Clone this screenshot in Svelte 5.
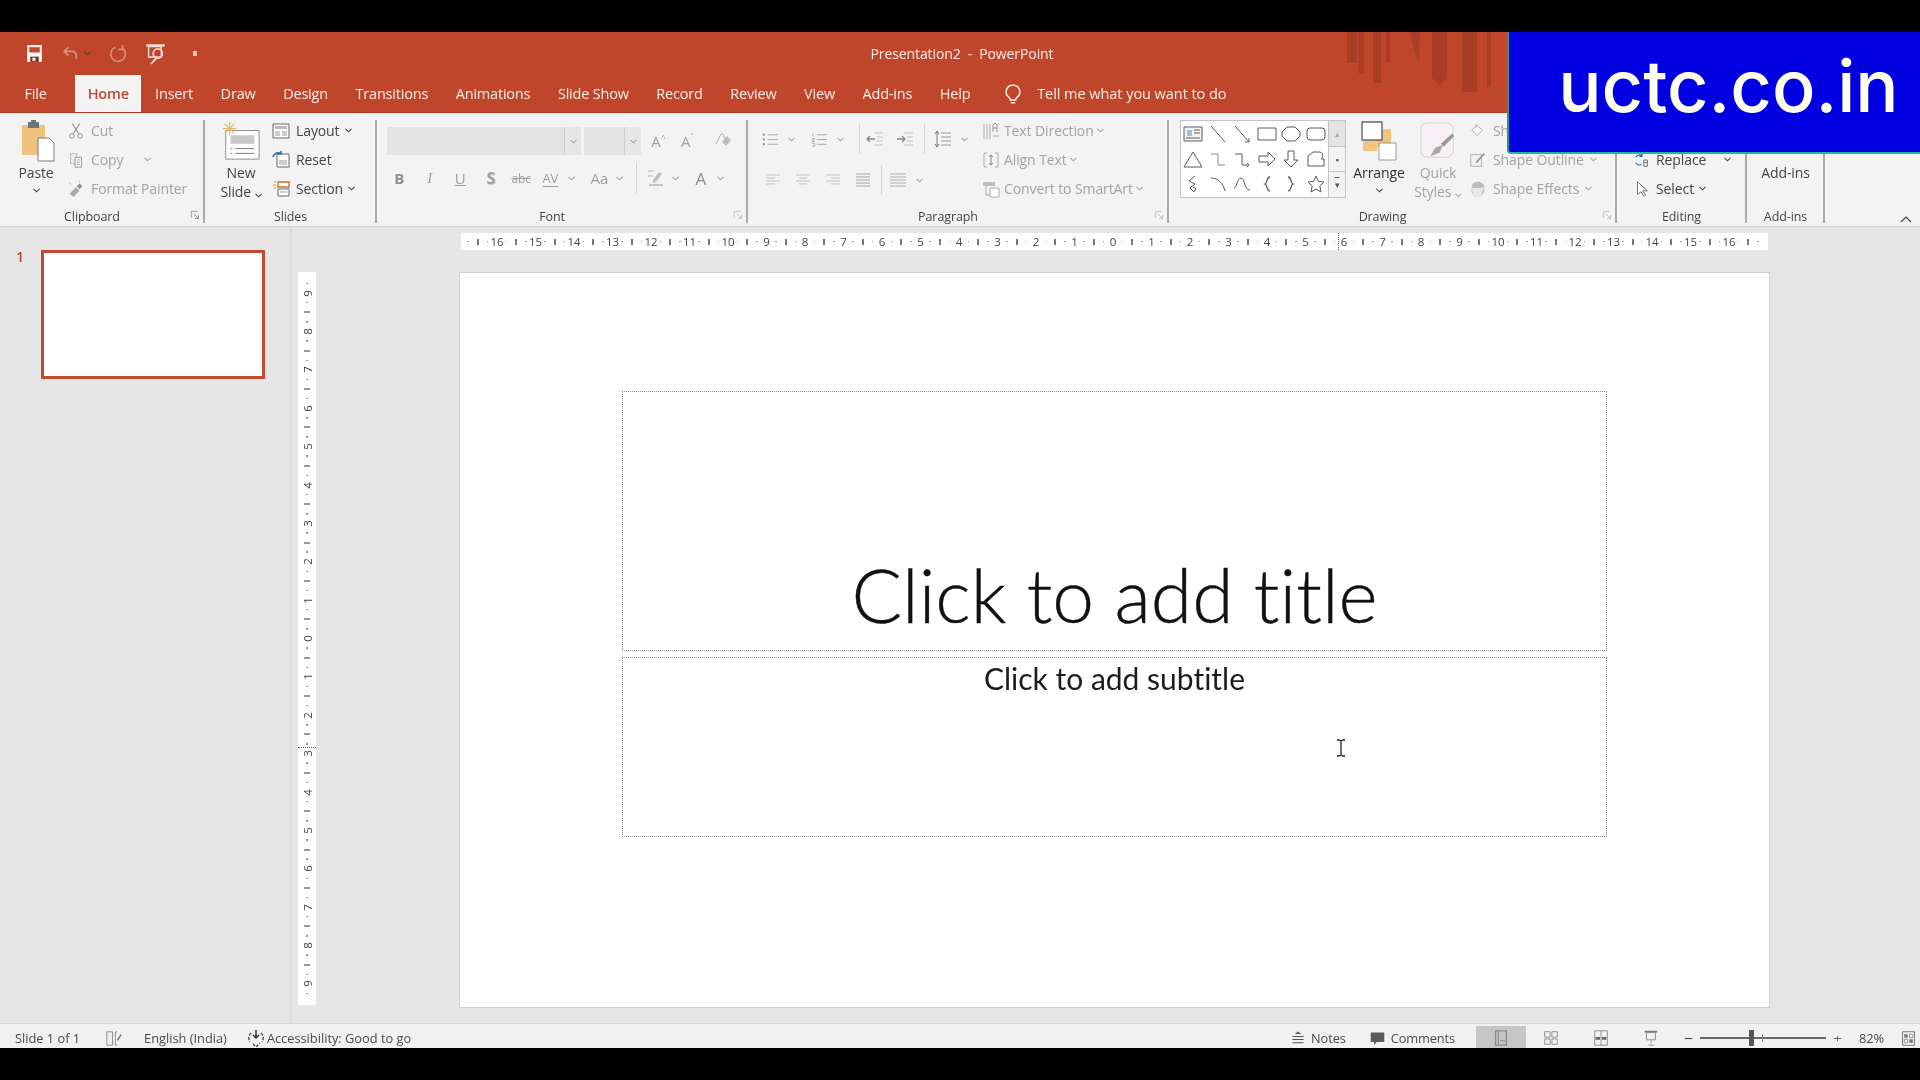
<script>
  const tabs = ['Insert', 'Draw', 'Design', 'Transitions', 'Animations', 'Slide Show', 'Record', 'Review', 'View', 'Add-ins', 'Help'];

  // ruler marks, one slot per quarter of a unit
  function marks(n) {
    const out = [];
    for (let q = -n; q <= n; q++) {
      if (q % 4 === 0) out.push({ kind: 'num', label: Math.abs(q / 4) });
      else if (q % 2 === 0) out.push({ kind: 'tick' });
      else out.push({ kind: 'dot' });
    }
    return out;
  }
  const hMarks = marks(67);
  const vMarks = marks(37);

  const G = '#8d8d8d';
  const icons = {
    save: `<path d="M3 2h14v16H3z" fill="#fbf3f0"/><path d="M5 4h10v5H5z" fill="#c8452a"/><path d="M6 13h8v5H6z" fill="#6b3527"/><path d="M8 14h3v3H8z" fill="#fbf3f0"/>`,
    undo: `<path d="M15 15c2-4-1-8-6-7H4M8 4 4 8l4 4" fill="none" stroke="#d98e7b" stroke-width="1.6"/>`,
    redo: `<path d="M7 4a7 7 0 1 0 7 1M14 2v4h-4" fill="none" stroke="#d98e7b" stroke-width="1.6"/>`,
    present: `<path d="M2 2h16v2H2z" fill="#f4ddd6"/><path d="M4 4h11v9H4z" fill="none" stroke="#f4ddd6" stroke-width="1.200"/><circle cx="12" cy="10" r="4" fill="none" stroke="#f4ddd6" stroke-width="1.500"/><path d="m6 19 5-5" stroke="#f4ddd6" stroke-width="1.500"/>`,
    cut: `<path d="m6 2 7 11M14 2 7 13" stroke="${G}" fill="none" stroke-width="1.2"/><circle cx="5.5" cy="15.5" r="2.5" fill="none" stroke="${G}"/><circle cx="14.5" cy="15.5" r="2.5" fill="none" stroke="${G}"/>`,
    copy: `<path d="M4 3h7v11H4z" fill="#eee" stroke="#b5b5b5"/><path d="M9 7h7v11H9z" fill="#fff" stroke="${G}"/><path d="M11 10h3M11 12.500h3M11 15h3" stroke="${G}"/>`,
    painter: `<path d="m3 15 7-7 4 4-7 7z" fill="#aaa"/><path d="m11 7 3-3 3 3-3 3z" fill="${G}"/><path d="M14 1v2M3 3l1 2" stroke="#d8b77c"/>`,
    layout: `<path d="M2 3h16v14H2z" fill="#fff" stroke="#666"/><path d="M4 5h12v3H4z" fill="#bbb"/><path d="M4 10h5v5H4zM11 10h5v5h-5z" fill="#ccc"/>`,
    reset: `<path d="M6 4h12v13H6z" fill="#fff" stroke="#666"/><path d="M8 10h8v5H8z" fill="#ccc"/><path d="M2 7a5 5 0 0 1 8-3M10 1v3H7" fill="none" stroke="#2c6fb3" stroke-width="1.6"/>`,
    section: `<path d="M7 3h11v5H7z" fill="#fff" stroke="#d0702c" stroke-width="1.4"/><path d="M7 10h11v7H7z" fill="#fff" stroke="#666"/><path d="M3 3h2M2 6h3M3 9h2" stroke="#e6b36c" stroke-width="1.3"/><path d="M9 13h7" stroke="#999"/>`,
    launcher: `<path d="M2 2h10M2 2v10" stroke="#777"/><path d="m6 6 7 7M13 8v5H8" fill="none" stroke="#555"/>`,
    launcherOff: `<path d="M2 2h10M2 2v10" stroke="#b0b0b0"/><path d="m6 6 7 7M13 8v5H8" fill="none" stroke="#aaa"/>`,
    clear: `<path d="m9 11 5-6 4 4-5 6z" fill="#bdbdbd"/><path d="M3 13 8 3h2l4 9" fill="none" stroke="#b4b4b4"/>`,
    hilite: `<path d="M2 8h5M2 3h6" stroke="#b8b8b8" stroke-width="1.200"/><path d="m7 12 6-8 3 2-6 8-3 1z" fill="#bfbfbf"/><path d="M3 17h14" stroke="#c4c4c4" stroke-width="2"/>`,
    bullets: `<path d="M7 5h11M7 10h11M7 15h11" stroke="#a8a8a8"/><circle cx="3" cy="5" r="1.200" fill="#999"/><circle cx="3" cy="10" r="1.200" fill="#999"/><circle cx="3" cy="15" r="1.200" fill="#999"/>`,
    numbers: `<path d="M7 5h11M7 10h11M7 15h11" stroke="#a8a8a8"/><path d="M3 3v4M2 9h3l-3 3h3M2 14h3v3H2" stroke="#999" fill="none" stroke-width=".8"/>`,
    indentL: `<path d="M9 4h9M12 8h6M12 12h6M9 16h9" stroke="#c4c4c4"/><path d="M10 10H2m3-3-3 3 3 3" stroke="#888" fill="none" stroke-width="1.300"/>`,
    indentR: `<path d="M9 4h9M12 8h6M12 12h6M9 16h9" stroke="#c4c4c4"/><path d="M2 10h8M7 7l3 3-3 3" stroke="#888" fill="none" stroke-width="1.300"/>`,
    spacing: `<path d="M8 4h10M8 8h10M8 12h10M8 16h10" stroke="#999"/><path d="M4 2v16M2 5l2-3 2 3M2 15l2 3 2-3" fill="none" stroke="#777"/>`,
    alignL: `<path d="M3 5h14M3 8h9M3 11h14M3 14h9" stroke="#c4c4c4" stroke-width="1.200"/>`,
    alignC: `<path d="M3 5h14M6 8h8M3 11h14M6 14h8" stroke="#c4c4c4" stroke-width="1.200"/>`,
    alignR: `<path d="M3 5h14M8 8h9M3 11h14M8 14h9" stroke="#c4c4c4" stroke-width="1.200"/>`,
    justify: `<path d="M3 4h14M3 7h14M3 10h14M3 13h14M3 16h14" stroke="#a5a5a5" stroke-width="1.200"/>`,
    cols: `<path d="M2 4h16M2 7h16M2 10h16M2 13h16M2 16h16" stroke="#b0b0b0"/>`,
    textDir: `<path d="M3 3v15M6 3v15M9 3v15" stroke="#aaa"/><path d="M12 11V4l2-2 2 2v7M12 7h4" fill="none" stroke="#999"/><path d="M12 15h6" stroke="#aaa"/>`,
    alignText: `<path d="M6 3H3v14h3M14 3h3v14h-3" fill="none" stroke="#aaa"/><path d="M10 5v10M8 7l2-2 2 2M8 13l2 2 2-2" fill="none" stroke="#888"/>`,
    smartArt: `<path d="M2 3h12v4H2z" fill="#bbb"/><path d="M9 9h9v9H9z" fill="#fff" stroke="#aaa"/><path d="M5 7v9h4" fill="none" stroke="#aaa"/>`,
    fill: `<path d="m9 4 6 5-6 6-6-6z" fill="#f8f8f8" stroke="#aaa"/><path d="M8 2v4" stroke="#aaa"/>`,
    outline: `<path d="M2 4h12v13H2z" fill="none" stroke="#aaa"/><path d="m8 13 9-10" stroke="#999" stroke-width="2"/>`,
    effects: `<path d="M3 8c0-4 3-6 7-6s7 3 7 6v5l-4 5H6l-3-4z" fill="#bdbdbd"/><path d="M3 9h10l4-1-4 10H5z" fill="#e8e8e8"/>`,
    replace: `<path d="M3 7c2-3 5-3 7-2M10 3v3H7" stroke="#2c6fb3" fill="none" stroke-width="1.300"/><path d="M3 13c2 3 4 3 6 2" stroke="#2c6fb3" fill="none" stroke-width="1.300"/><path d="M12 10h4v7h-4zM12 13h4" stroke="#666" fill="none"/>`,
    select: `<path d="M5 2v14l4-3 3 5 2-1-3-5h5z" fill="#fff" stroke="#666"/>`,
    bulb: `<path d="M10 2a6 6 0 0 0-3.500 11c.8.7 1 1.500 1 2.500h5c0-1 .2-1.800 1-2.500A6 6 0 0 0 10 2zM8 18h4" fill="none" stroke="#fbeee9" stroke-width="1.300"/>`,
    notesPage: `<path d="M3 3h6v14H3zM12 3h2M12 17h2M12 3v14" fill="none" stroke="#8a8a8a"/><path d="m14 12 4-6" stroke="#666" stroke-width="1.300"/>`,
    access: `<path d="M10 2v8M7 7l3 3 3-3" fill="none" stroke="#333" stroke-width="1.500"/><path d="M5 5a7 7 0 0 0-1 9M15 5a7 7 0 0 1 1 9M7 16l3 3 4-4" fill="none" stroke="#444" stroke-width="1.300" stroke-dasharray="3 1.500"/>`,
    notes: `<path d="M3 8h14M3 12h14M3 16h14" stroke="#555" stroke-width="1.300"/><path d="m6 5 4-3 4 3z" fill="#555"/>`,
    comments: `<path d="M2 3h16v11H9l-3 4v-4H2z" fill="#5a5a5a"/>`,
    normal: `<path d="M4 2h12v16H4z" fill="none" stroke="#8a8a8a" stroke-width="1.400"/><path d="M7 2v16M9 13h6" stroke="#8a8a8a" stroke-width="1.200"/>`,
    sorter: `<path d="M3 3h6v6H3zM11 3h6v6h-6zM3 11h6v6H3zM11 11h6v6h-6z" fill="none" stroke="#8a8a8a"/>`,
    reading: `<path d="M3 2h14v16H3zM10 2v16" fill="none" stroke="#8a8a8a"/><path d="M4 9h5v3H4zM11 9h5v3h-5z" fill="#666"/>`,
    show: `<path d="M3 3h14" stroke="#777" stroke-width="2"/><path d="M5 4h10v8H5zM10 12v4M7 18h6" fill="none" stroke="#8a8a8a"/>`,
    fit: `<path d="M3 2h14v16H3z" fill="none" stroke="#666"/><path d="M5 5h4v4H5zM11 11h4v4h-4z" fill="#777"/><path d="M11 5h4v4h-4zM5 11h4v4H5z" fill="none" stroke="#888"/>`,
    minus: `<path d="M3 10h14" stroke="#444" stroke-width="2"/>`,
    plus: `<path d="M3 10h14M10 5v10" stroke="#444" stroke-width="1.400"/>`,
    ibeam: `<path d="M6 2h2l2 1 2-1h2M10 3v14M6 18h2l2-1 2 1h2" fill="none" stroke="#222" stroke-width="1.300"/>`
  };

  const S = '#5a5a5a';
  const shapes = [
    `<path d="M1 3h18v14H1z" fill="#f4f4f4" stroke="${S}"/><path d="M4 6h5v6H4z" fill="#9dbfe6"/><path d="M11 6h6M11 9h6M3 14h14" stroke="${S}"/>`,
    `<path d="m3 2 14 16" stroke="${S}"/>`,
    `<path d="m3 2 14 16M17 14v4h-4" stroke="${S}" fill="none"/>`,
    `<path d="M1 4h18v12H1z" fill="none" stroke="${S}"/>`,
    `<path d="M6 3h8l5 5v4l-5 5H6l-5-5V8z" fill="none" stroke="${S}"/>`,
    `<rect x="1" y="4" width="18" height="12" rx="3" fill="none" stroke="${S}"/>`,
    `<path d="M10 3 1 18h18z" fill="none" stroke="${S}"/>`,
    `<path d="M3 5h7v11h7" fill="none" stroke="#8b8b8b"/>`,
    `<path d="M3 5h7v11h7m-2-2 2 2-2 2" fill="none" stroke="${S}"/>`,
    `<path d="M2 7h9V3l7 7-7 7v-4H2z" fill="none" stroke="${S}"/>`,
    `<path d="M7 2h6v9h4l-7 7-7-7h4z" fill="none" stroke="${S}"/>`,
    `<path d="M2 17V7l5-4h6c3 0 5 3 3 6l-1 1h3v7z" fill="none" stroke="${S}"/>`,
    `<path d="m12 2-6 5 6 3-5 4 4 4 2-3-3-2" fill="none" stroke="${S}"/>`,
    `<path d="M3 4c7 0 12 5 14 13" fill="none" stroke="${S}"/>`,
    `<path d="M2 14c3 0 3-10 7-10s3 12 9 12" fill="none" stroke="${S}"/>`,
    `<path d="M13 3c-4 0-2 6-5 7 3 1 1 7 5 7" fill="none" stroke="${S}" stroke-width="1.300"/>`,
    `<path d="M7 3c4 0 2 6 5 7-3 1-1 7-5 7" fill="none" stroke="${S}" stroke-width="1.300"/>`,
    `<path d="m10 2 2.500 5.500 5.500.5-4.200 4 1.200 6-5-3-5 3 1.200-6L2 8l5.500-.5z" fill="none" stroke="${S}"/>`
  ];
</script>

{#snippet ico(name, size = 18)}
  <svg class="ico" width={size} height={size} viewBox="0 0 20 20">{@html icons[name]}</svg>
{/snippet}

{#snippet caret(off = false)}
  <svg class="caret" class:off width="7" height="5" viewBox="0 0 7 5"><path d="m.5.8 3 3 3-3" fill="none" stroke="currentColor" stroke-width="1.100"/></svg>
{/snippet}

<div class="page">
  <div class="blackbar top"></div>

  <header class="chrome">
    <svg class="art" width="160" height="62" viewBox="0 0 160 62">
      <path d="M7 0h10v31H7zM18 0h6v41h-6zM33 0h8v51h-8zM46 0h4v31h-4zM70 0h10l-1 28-4-6zM92 0h15v46l-8 7-7-7zM122 0h15v60h-15zM147 0h4v55h-4z" fill="#a83e25"/>
    </svg>
    <div class="titlerow">
      <div class="qat">
        {@render ico('save', 21)}
        {@render ico('undo', 21)}
        <span class="qcaret">{@render caret()}</span>
        <span class="redo">{@render ico('redo', 21)}</span>
        {@render ico('present', 23)}
        <span class="qdot"></span>
      </div>
      <div class="doctitle">Presentation2&nbsp; -&nbsp; PowerPoint</div>
      <div></div>
    </div>
    <nav class="tabs">
      <div class="tab file">File</div>
      <div class="tab active">Home</div>
      {#each tabs as t}
        <div class="tab">{t}</div>
      {/each}
      <div class="tell">{@render ico('bulb', 22)}<span>Tell me what you want to do</span></div>
    </nav>
  </header>

  <section class="ribbon">
    <div class="group g-clip">
      <div class="body">
        <div class="big paste">
          <svg width="36" height="44" viewBox="0 0 36 44">
            <path d="M2 6h23v30H2z" fill="#efc27e"/><path d="M8 3h11v6H8z" fill="#6d7377"/><path d="M11 1h5v3h-5z" fill="#6d7377"/>
            <path d="M18 19h11l5 5v18H18z" fill="#fff" stroke="#7a7a7a"/>
          </svg>
          <span>Paste</span>
          {@render caret()}
        </div>
        <div class="rows">
          <div class="row off">{@render ico('cut')}<span>Cut</span></div>
          <div class="row off">{@render ico('copy')}<span>Copy</span><i class="gap"></i>{@render caret(true)}</div>
          <div class="row off">{@render ico('painter')}<span>Format Painter</span></div>
        </div>
      </div>
      <div class="label">Clipboard<span class="launch">{@render ico('launcher', 13)}</span></div>
    </div>
    <div class="sep"></div>

    <div class="group g-slides">
      <div class="body">
        <div class="big newslide">
          <svg width="40" height="40" viewBox="0 0 40 42">
            <path d="M4 10h35v30H4z" fill="#fff" stroke="#8a8a8a"/><path d="M9 15h25v9H9z" fill="#c8c8c8"/><path d="M14 29h20M14 34h20M9 29h2M9 34h2" stroke="#777"/>
            <path d="M8 1v14M1 8h14M3 3l10 10M13 3 3 13" stroke="#eab96b" stroke-width="1.400"/>
          </svg>
          <span>New</span>
          <span>Slide {@render caret()}</span>
        </div>
        <div class="rows">
          <div class="row">{@render ico('layout', 20)}<span>Layout</span>{@render caret()}</div>
          <div class="row">{@render ico('reset', 20)}<span>Reset</span></div>
          <div class="row">{@render ico('section', 20)}<span>Section</span>{@render caret()}</div>
        </div>
      </div>
      <div class="label">Slides</div>
    </div>
    <div class="sep"></div>

    <div class="group g-font">
      <div class="body col">
        <div class="fontrow one">
          <div class="combo name"><i></i><b>{@render caret(true)}</b></div>
          <div class="combo size"><i></i><b>{@render caret(true)}</b></div>
          <span class="grow">A<sup>^</sup></span>
          <span class="grow">A<sup>ˇ</sup></span>
          <span class="clear">{@render ico('clear', 20)}</span>
        </div>
        <div class="fontrow two">
          <span class="fb bold">B</span>
          <span class="fb ital">I</span>
          <span class="fb und">U</span>
          <span class="fb shad">S</span>
          <span class="fb strike">abc</span>
          <span class="fb wide w-av"><em class="av">AV</em>{@render caret(true)}</span>
          <span class="fb wide w-aa"><em>Aa</em>{@render caret(true)}</span>
          <span class="vsep"></span>
          <span class="fb wide w-hl">{@render ico('hilite', 20)}{@render caret(true)}</span>
          <span class="fb wide w-a"><em>A</em>{@render caret(true)}</span>
        </div>
      </div>
      <div class="label launchable">Font<span class="launch">{@render ico('launcherOff', 13)}</span></div>
    </div>
    <div class="sep"></div>

    <div class="group g-para">
      <div class="body">
        <div class="paraleft">
          <div class="pararow">
            <span class="pb">{@render ico('bullets', 19)}{@render caret(true)}</span>
            <span class="pb">{@render ico('numbers', 19)}{@render caret(true)}</span>
            <span class="vsep"></span>
            <span class="pi">{@render ico('indentL', 20)}</span>
            <span class="pi">{@render ico('indentR', 20)}</span>
            <span class="vsep v2"></span>
            <span class="pb last">{@render ico('spacing', 20)}{@render caret(true)}</span>
          </div>
          <div class="pararow two">
            <span class="pa">{@render ico('alignL', 20)}</span>
            <span class="pa">{@render ico('alignC', 20)}</span>
            <span class="pa">{@render ico('alignR', 20)}</span>
            <span class="pa">{@render ico('justify', 20)}</span>
            <span class="vsep"></span>
            <span class="pb">{@render ico('cols', 20)}{@render caret(true)}</span>
          </div>
        </div>
        <div class="rows">
          <div class="row off">{@render ico('textDir', 20)}<span>Text Direction</span>{@render caret(true)}</div>
          <div class="row off">{@render ico('alignText', 20)}<span>Align Text</span>{@render caret(true)}</div>
          <div class="row off">{@render ico('smartArt', 20)}<span>Convert to SmartArt</span>{@render caret(true)}</div>
        </div>
      </div>
      <div class="label launchable">Paragraph<span class="launch">{@render ico('launcherOff', 13)}</span></div>
    </div>
    <div class="sep"></div>

    <div class="group g-draw">
      <div class="body">
        <div class="gallery">
          <div class="shapes">
            {#each shapes as s}
              <svg width="20" height="20" viewBox="0 0 20 20">{@html s}</svg>
            {/each}
          </div>
          <div class="scroller">
            <span class="sup">▴</span>
            <span>▪</span>
            <span class="more">▾</span>
          </div>
        </div>
        <div class="big arrange">
          <svg width="40" height="40" viewBox="0 0 40 40">
            <path d="M14 8h18v18H14zM4 20h14v10H4z" fill="#f2c57f"/>
            <path d="M3 1h20v18H3z" fill="#fff" stroke="#666" stroke-width="1.400"/>
            <path d="M20 22h17v17H20z" fill="#fff" stroke="#9a9a9a"/>
          </svg>
          <span>Arrange</span>
          {@render caret()}
        </div>
        <div class="big quick off">
          <svg width="40" height="40" viewBox="0 0 40 42">
            <rect x="2" y="2" width="34" height="36" rx="7" fill="#f8f0f5" stroke="#d4d0d2"/>
            <path d="m12 37 5-9 8-3-3 8z" fill="#aaa"/><path d="m23 24 12-11 2 3-11 11z" fill="#999"/>
          </svg>
          <span>Quick</span>
          <span>Styles {@render caret(true)}</span>
        </div>
        <div class="rows shapefmt">
          <div class="row off">{@render ico('fill', 18)}<span>Shape Fill</span></div>
          <div class="row off">{@render ico('outline', 18)}<span>Shape Outline</span>{@render caret(true)}</div>
          <div class="row off">{@render ico('effects', 18)}<span>Shape Effects</span>{@render caret(true)}</div>
        </div>
      </div>
      <div class="label launchable">Drawing<span class="launch">{@render ico('launcherOff', 13)}</span></div>
    </div>
    <div class="sep"></div>

    <div class="group g-edit">
      <div class="body">
        <div class="rows">
          <div class="row">{@render ico('replace', 18)}<span>Find</span></div>
          <div class="row">{@render ico('replace', 18)}<span>Replace</span><i class="gap"></i>{@render caret()}</div>
          <div class="row">{@render ico('select', 18)}<span>Select</span>{@render caret()}</div>
        </div>
      </div>
      <div class="label">Editing</div>
    </div>
    <div class="sep"></div>

    <div class="group g-addins">
      <div class="body center"><span>Add-ins</span></div>
      <div class="label">Add-ins</div>
    </div>
    <div class="sep"></div>

    <div class="collapse">
      <svg width="12" height="8" viewBox="0 0 12 8"><path d="m1 7 5-5 5 5" fill="none" stroke="#444" stroke-width="1.200"/></svg>
    </div>
  </section>

  <main class="work">
    <aside class="pane">
      <span class="num">1</span>
      <div class="thumb"></div>
    </aside>
    <div class="stage">
      <div class="hruler">
        {#each hMarks as m}
          <span class="hslot">
            {#if m.kind === 'num'}{m.label}{:else if m.kind === 'tick'}<i class="t"></i>{:else}<i class="d"></i>{/if}
          </span>
        {/each}
        <i class="hcursor"></i>
      </div>
      <div class="vruler">
        {#each vMarks as m}
          <span class="vslot">
            {#if m.kind === 'num'}<em>{m.label}</em>{:else if m.kind === 'tick'}<i class="t"></i>{:else}<i class="d"></i>{/if}
          </span>
        {/each}
        <i class="vcursor"></i>
      </div>
      <div class="slide">
        <div class="ph title"><span>Click to add title</span></div>
        <div class="ph subtitle"><span>Click to add subtitle</span></div>
        <span class="beam">{@render ico('ibeam', 20)}</span>
      </div>
    </div>
  </main>

  <footer class="status">
    <div class="sleft">
      <span class="s1">Slide 1 of 1</span>
      <span class="s2">{@render ico('notesPage', 19)}</span>
      <span class="s3">English (India)</span>
      <span class="s4">{@render ico('access', 20)}<span>Accessibility: Good to go</span></span>
    </div>
    <div class="sright">
      <span class="sbtn notes">{@render ico('notes', 16)}Notes</span>
      <span class="sbtn comm">{@render ico('comments', 17)}Comments</span>
      <span class="view on">{@render ico('normal', 18)}</span>
      <span class="view">{@render ico('sorter', 18)}</span>
      <span class="view">{@render ico('reading', 18)}</span>
      <span class="view">{@render ico('show', 18)}</span>
      <span class="zoomctl">
        {@render ico('minus', 11)}
        <span class="slider"><i class="mid"></i><i class="thumbz"></i></span>
        {@render ico('plus', 11)}
      </span>
      <span class="pct">82%</span>
      <span class="fit">{@render ico('fit', 17)}</span>
    </div>
  </footer>

  <div class="blackbar bottom"></div>

  <div class="badge">uctc.co.in</div>
</div>

<style>
  :global(body) {
    margin: 0;
    background: #000;
  }

  .page {
    position: relative;
    width: 1920px;
    height: 1080px;
    overflow: hidden;
    display: flex;
    flex-direction: column;
    font-family: "Open Sans", "Liberation Sans", sans-serif;
    font-size: 13px;
    color: #444;
    background: #000;
    filter: blur(0.35px);
  }

  .blackbar { background: #000; flex: none; }
  .blackbar.top { height: 32px; }
  .blackbar.bottom { height: 32px; }

  /* title bar + tabs */
  .chrome {
    position: relative;
    height: 81px;
    flex: none;
    background: #bf462a;
    border-bottom: 1px solid #a93c22;
    box-sizing: border-box;
    color: #fbeee9;
  }

  .art {
    position: absolute;
    left: 1340px;
    top: 0;
  }

  .titlerow {
    height: 43px;
    display: grid;
    grid-template-columns: 1fr auto 1fr;
    align-items: center;
  }

  .qat {
    display: flex;
    align-items: center;
    padding-left: 24px;
    gap: 15px;
  }

  .qcaret {
    margin-left: -12px;
    color: #d98e7b;
    display: flex;
  }

  .redo { display: flex; margin-left: 2px; }

  .qdot {
    width: 4px;
    height: 5px;
    background: #f0c9bd;
    margin-left: 11px;
  }

  .doctitle {
    font-size: 14px;
    margin-left: 4px;
    letter-spacing: -0.1px;
  }

  .tabs {
    height: 37px;
    display: flex;
    align-items: stretch;
    font-size: 14.500px;
    letter-spacing: -0.2px;
  }

  .tab {
    padding: 0 13.800px;
    display: flex;
    align-items: center;
  }

  .tab.file {
    margin-left: 11px;
    margin-right: 15px;
    padding: 0 13.500px;
  }

  .tab.active {
    background: #f3f3f3;
    color: #bd4a30;
    font-weight: 600;
    padding: 0 12.5px;
  }

  .tell {
    display: flex;
    align-items: center;
    gap: 13px;
    margin-left: 18px;
    letter-spacing: -0.05px;
  }

  /* ribbon */
  .ribbon {
    height: 114px;
    flex: none;
    display: flex;
    background: #f3f3f3;
    border-top: 1px solid #e2eef4;
    border-bottom: 1px solid #d4d4d4;
    box-sizing: border-box;
    font-size: 14px;
    letter-spacing: -0.1px;
    color: #444;
  }

  .group {
    display: flex;
    flex-direction: column;
    flex: none;
    padding-top: 2px;
    box-sizing: border-box;
  }

  .g-clip { width: 204px; }
  .g-slides { width: 171px; }
  .g-font { width: 370px; }
  .g-para { width: 420px; }
  .g-draw { width: 447px; }
  .g-edit { width: 129px; }
  .g-addins { width: 77px; }

  .body {
    height: 91px;
    display: flex;
    flex: none;
  }

  .body.col { flex-direction: column; }

  .body.center {
    align-items: flex-start;
    justify-content: center;
    padding-top: 47px;
    box-sizing: border-box;
  }

  .label {
    position: relative;
    flex: 1;
    display: flex;
    align-items: center;
    justify-content: center;
    font-size: 12.5px;
    color: #444;
  }

  .label.launchable { padding-right: 20px; }
  .g-clip .label { padding-right: 20px; }

  .launch {
    position: absolute;
    right: 1px;
    top: 3px;
    display: flex;
  }

  .sep {
    width: 2px;
    flex: none;
    margin: 6px 0 3px -1px;
    background: #a9a9a9;
  }

  .big {
    display: flex;
    flex-direction: column;
    align-items: center;
    line-height: 19px;
    flex: none;
  }

  .big svg:first-child { margin-bottom: 2px; }

  .big .caret { margin-top: 6px; }

  .big.off { color: #a3a3a3; }

  .paste {
    width: 44px;
    margin: 3px 0 0 14px;
  }

  .paste svg:first-child { margin-bottom: 0; margin-left: 4px; }

  .newslide {
    width: 56px;
    margin: 5px 0 0 8px;
  }

  .rows {
    display: flex;
    flex-direction: column;
    flex: none;
  }

  .row {
    height: 29px;
    display: flex;
    align-items: center;
    gap: 5px;
    white-space: nowrap;
  }

  .row.off { color: #a3a3a3; }

  .row .gap { width: 9px; }

  .g-clip .rows { margin-left: 9px; }
  .g-clip .row { gap: 6px; }
  .g-slides .rows { margin-left: 2px; }

  .caret {
    flex: none;
    color: #444;
    vertical-align: middle;
  }

  .caret.off { color: #a5a5a5; }

  /* font group */
  .fontrow {
    display: flex;
    align-items: center;
    height: 28px;
  }

  .fontrow.one {
    margin: 11px 0 0 10px;
    color: #a0a0a0;
  }

  .fontrow.two {
    margin: 9px 0 0 7px;
    color: #a0a0a0;
    font-size: 15px;
  }

  .combo {
    height: 28px;
    display: flex;
    background: #e3e3e3;
    margin-right: 3px;
  }

  .combo i { display: block; }
  .combo b {
    width: 16px;
    display: flex;
    align-items: center;
    justify-content: center;
    border-left: 1px solid #cfcfcf;
    background: #e6e6e6;
  }

  .combo.name i { width: 177px; }
  .combo.size i { width: 40px; }

  .grow {
    width: 29px;
    text-align: center;
    font-size: 15px;
  }

  .grow sup { font-size: 9px; line-height: 0; }

  .clear {
    display: flex;
    margin-left: 11px;
  }

  .fb {
    width: 30.500px;
    display: flex;
    align-items: center;
    justify-content: center;
    flex: none;
  }

  .fb em { font-style: normal; }

  .fb.wide { justify-content: flex-start; }

  .w-av { width: 47px; padding-left: 6px; gap: 10px; box-sizing: border-box; }
  .w-aa { width: 50px; padding-left: 7px; gap: 8px; box-sizing: border-box; }
  .w-hl { width: 50px; padding-left: 9px; gap: 6px; box-sizing: border-box; }
  .w-a { width: 50px; padding-left: 9px; gap: 11px; box-sizing: border-box; font-size: 17px; color: #8f8f8f; }

  .bold { font-weight: 700; color: #8f8f8f; }
  .ital { font-style: italic; font-family: "Liberation Serif", serif; }
  .und { text-decoration: underline; }
  .shad { font-weight: 700; text-shadow: 1px 1px 0 #ccc; font-size: 16px; }
  .strike { text-decoration: line-through; font-size: 12px; }
  .av { text-decoration: underline; text-underline-offset: 3px; font-size: 13px; }

  .vsep {
    width: 1px;
    height: 30px;
    background: #d4d4d4;
    flex: none;
  }

  .fontrow .vsep { margin-left: 2px; }

  /* paragraph group */
  .paraleft {
    width: 233px;
    flex: none;
    padding: 9px 0 0 10px;
    box-sizing: border-box;
  }

  .pararow {
    display: flex;
    align-items: center;
    height: 28px;
  }

  .pararow.two { margin-top: 13px; }

  .pb {
    display: flex;
    align-items: center;
    gap: 8px;
    width: 49px;
    flex: none;
    padding-left: 3px;
    box-sizing: border-box;
  }

  .pb.last { padding-left: 5px; }

  .pi {
    display: flex;
    justify-content: center;
    width: 24px;
    flex: none;
  }

  .pi + .pi { margin-left: 6px; }

  .pa {
    display: flex;
    justify-content: center;
    width: 30px;
    flex: none;
  }

  .pararow .vsep { margin: 0 3px; }
  .pararow .vsep.v2 { margin: 0 3px 0 7px; }

  .g-para .rows .row { gap: 3px; }

  /* drawing group */
  .gallery {
    display: flex;
    width: 166px;
    height: 78px;
    margin: 4px 0 0 11px;
    box-sizing: border-box;
    background: #fff;
    border: 1px solid #c4c4c4;
    flex: none;
  }

  .shapes {
    display: grid;
    grid-template-columns: repeat(6, 24.500px);
    grid-template-rows: repeat(3, 1fr);
    place-items: center;
    flex: 1;
  }

  .scroller {
    width: 18px;
    display: flex;
    flex-direction: column;
    border-left: 1px solid #c4c4c4;
    font-size: 9px;
    color: #555;
    background: #f3f3f3;
  }

  .scroller span {
    flex: 1;
    display: flex;
    align-items: center;
    justify-content: center;
    border-bottom: 1px solid #c4c4c4;
  }

  .scroller span:last-child { border-bottom: 0; }
  .scroller .sup { background: #e4e4e4; color: #aaa; }
  .scroller .more { text-decoration: overline; }

  .arrange {
    width: 60px;
    margin: 5px 0 0 3px;
    color: #333;
  }

  .quick {
    width: 56px;
    margin: 5px 0 0 1px;
  }

  .shapefmt { margin-left: 3px; }
  .shapefmt .row { gap: 6px; }

  /* editing group */
  .g-edit .rows { margin-left: 16px; }
  .g-edit .gap { width: 8px; }

  .collapse {
    flex: 1;
    display: flex;
    align-items: flex-end;
    justify-content: flex-end;
    padding: 0 8px 3px 0;
  }

  /* workspace */
  .work {
    flex: 1;
    display: flex;
    min-height: 0;
    background: #e6e6e6;
    border-bottom: 1px solid #d9d9d9;
    box-sizing: border-box;
  }

  .pane {
    width: 292px;
    flex: none;
    box-sizing: border-box;
    border-right: 2px solid #dcdcdc;
    display: flex;
    align-items: flex-start;
    padding: 23px 0 0 16px;
  }

  .num {
    color: #b7472a;
    font-size: 14px;
    font-weight: 600;
    width: 25px;
    line-height: 16px;
    margin-top: -1px;
  }

  .thumb {
    width: 224px;
    height: 129px;
    box-sizing: border-box;
    background: #fff;
    border: 3px solid #bf4a30;
  }

  .stage {
    flex: 1;
    display: grid;
    grid-template-columns: 18px 1311px;
    grid-template-rows: 17px 736px;
    column-gap: 143px;
    row-gap: 22px;
    padding: 6px 0 0 6px;
    box-sizing: border-box;
    align-content: start;
  }

  .hruler {
    grid-column: 2;
    position: relative;
    margin-left: 2px;
    width: 1307px;
    background: #fff;
    display: flex;
    justify-content: center;
    padding-right: 3px;
    box-sizing: border-box;
    align-items: center;
    overflow: hidden;
    font-size: 11.5px;
    color: #444;
  }

  .hslot {
    width: 9.625px;
    flex: none;
    display: flex;
    justify-content: center;
    align-items: center;
    white-space: nowrap;
  }

  .hslot .t {
    width: 2px;
    height: 6px;
    background: #777;
  }

  .hslot .d, .vslot .d {
    width: 1.500px;
    height: 1.500px;
    background: #999;
  }

  .hcursor {
    position: absolute;
    left: 877px;
    top: 0;
    height: 17px;
    border-left: 1px dotted #c0432a;
  }

  .vruler {
    grid-column: 1;
    grid-row: 2;
    position: relative;
    background: #fff;
    display: flex;
    flex-direction: column;
    justify-content: center;
    align-items: center;
    overflow: hidden;
    font-size: 11.5px;
    height: 733px;
  }

  .vslot {
    height: 9.600px;
    flex: none;
    width: 18px;
    display: flex;
    justify-content: center;
    align-items: center;
  }

  .vslot em {
    font-style: normal;
    transform: rotate(-90deg);
    white-space: nowrap;
  }

  .vslot .t {
    width: 6px;
    height: 2px;
    background: #999;
  }

  .vcursor {
    position: absolute;
    left: 0;
    top: 475px;
    width: 18px;
    border-top: 1px dotted #c0432a;
  }

  .slide {
    grid-column: 2;
    grid-row: 2;
    position: relative;
    background: #fff;
    border: 1px solid #cfcfcf;
    box-sizing: border-box;
    display: flex;
    flex-direction: column;
    align-items: center;
    padding-top: 118px;
    font-family: Lato, "Open Sans", sans-serif;
    font-variant-ligatures: none;
    color: #1c1c1c;
  }

  .ph {
    width: 985px;
    box-sizing: border-box;
    border: 1px dotted #8c8c8c;
    flex: none;
    display: flex;
    justify-content: center;
  }

  .title {
    height: 260px;
    align-items: flex-end;
    font-size: 75px;
    font-weight: 300;
    line-height: 98px;
    padding-bottom: 7px;
    color: #111;
    -webkit-text-stroke: 0.4px #111;
  }

  .subtitle {
    height: 180px;
    margin-top: 6px;
    font-size: 30px;
    line-height: 40px;
    padding-top: 0;
  }

  .beam {
    position: absolute;
    left: 871px;
    top: 465px;
    display: flex;
  }

  /* status bar */
  .status {
    height: 24px;
    flex: none;
    display: flex;
    justify-content: space-between;
    background: #f1f1f1;
    font-size: 12.800px;
    color: #4a4a4a;
    overflow: hidden;
  }

  .sleft, .sright {
    display: flex;
    align-items: center;
    padding-top: 4px;
  }

  .sright { letter-spacing: -0.1px; }

  .s1 { margin-left: 15px; }
  .s2 { margin-left: 24px; display: flex; }
  .s3 { margin-left: 21px; }
  .s4 { margin-left: 19px; display: flex; align-items: center; gap: 1px; }

  .sbtn {
    display: flex;
    align-items: center;
    gap: 5px;
  }

  .notes { margin-right: 23px; }
  .comm { margin-right: 21px; }

  .view {
    width: 50px;
    height: 24px;
    display: flex;
    align-items: center;
    justify-content: center;
  }

  .view.on { background: #c6c6c6; }

  .zoomctl {
    display: flex;
    align-items: center;
    gap: 6px;
    margin-left: 7px;
  }

  .slider {
    position: relative;
    width: 126px;
    height: 2px;
    background: #666;
    display: block;
  }

  .slider .thumbz {
    position: absolute;
    left: 49px;
    top: -7px;
    width: 5px;
    height: 16px;
    background: #555;
  }

  .slider .mid {
    position: absolute;
    left: 62px;
    top: -3px;
    width: 1px;
    height: 8px;
    background: #888;
  }

  .pct { margin-left: 16px; }
  .fit { display: flex; margin: 0 3px 0 16px; }

  /* channel watermark */
  .badge {
    position: absolute;
    right: 0;
    top: 32px;
    width: 413px;
    height: 122px;
    box-sizing: border-box;
    background: #0000e0;
    border-left: 2px solid #1f9a9a;
    border-bottom: 2px solid #1fb5a0;
    border-bottom-left-radius: 4px;
    color: #fffff0;
    font-family: Inter, "Open Sans", sans-serif;
    font-size: 72px;
    font-weight: 500;
    display: flex;
    align-items: center;
    justify-content: center;
    padding: 0 0 13px 28px;
    line-height: 1;
  }
</style>
